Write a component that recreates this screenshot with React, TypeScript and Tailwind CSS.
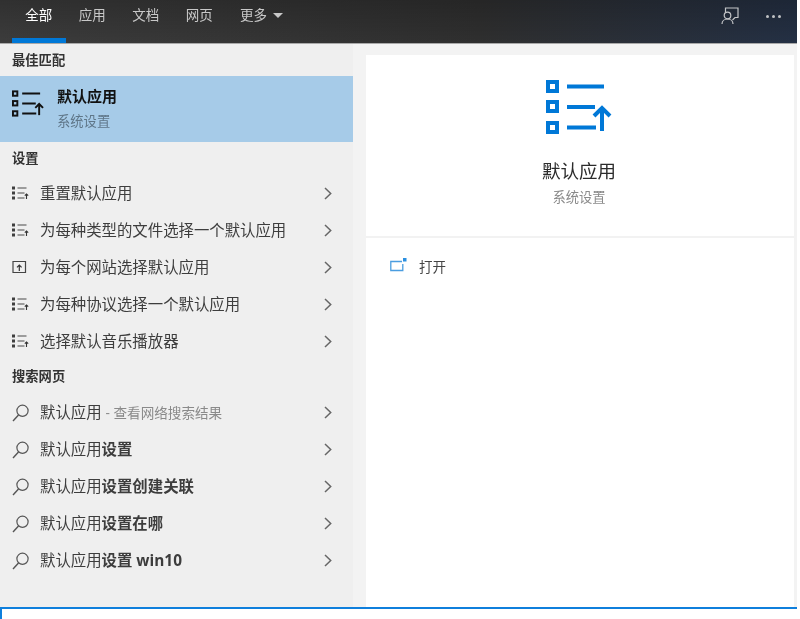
import { ReactNode } from 'react';

const tabs = ['全部', '应用', '文档', '网页'];

function ListUpIcon({ className, color }: { className: string; color: string }) {
  return (
    <svg viewBox="0 0 66 54" fill="none" className={className}>
      <g stroke={color} strokeWidth="4">
        <rect x="2" y="2" width="9" height="9" />
        <rect x="2" y="22" width="9" height="9" />
        <rect x="2" y="43" width="9" height="9" />
        <path d="M21 6.5h37M21 27h28M21 47.500h29" />
        <path d="M56 51V28" />
        <path d="M48 36l8-8 8 8" />
      </g>
    </svg>
  );
}

function SmallListIcon() {
  return (
    <svg viewBox="0 0 17 15" fill="none" className="w-[17px] h-[15px] shrink-0">
      <g fill="#3f3f3f">
        <rect x="0" y="0.500" width="3" height="3" />
        <rect x="0" y="5.500" width="3" height="3" />
        <rect x="0" y="10.500" width="3" height="3" />
      </g>
      <path d="M5.500 2h9M5.500 7h7M5.500 12h7" stroke="#4a4a4a" strokeWidth="1.100" />
      <path d="M14.500 13V8M12.800 9.700l1.700-1.700 1.700 1.700" stroke="#333" strokeWidth="1.100" />
    </svg>
  );
}

function WebIcon() {
  return (
    <svg viewBox="0 0 17 15" fill="none" className="w-[17px] h-[15px] shrink-0">
      <path d="M1 1.500h12.500v11H1z" stroke="#444" strokeWidth="1.200" />
      <path d="M7.300 11V5M5 7.300l2.300-2.300 2.300 2.300" stroke="#333" strokeWidth="1.200" />
    </svg>
  );
}

function SearchIcon() {
  return (
    <svg viewBox="0 0 17 18" fill="none" className="w-[17px] h-[18px] shrink-0">
      <circle cx="10.500" cy="6.800" r="5.600" stroke="#555" strokeWidth="1.200" />
      <path d="M6.500 11L1 17" stroke="#555" strokeWidth="1.400" />
    </svg>
  );
}

function Chevron() {
  return (
    <svg viewBox="0 0 8 13" fill="none" className="w-2 h-[13px] shrink-0">
      <path d="M1 1l5.700 5.500L1 12" stroke="#666" strokeWidth="1.500" />
    </svg>
  );
}

function FeedbackIcon() {
  return (
    <svg viewBox="0 0 18 18" fill="none" className="w-[18px] h-[18px]">
      <g stroke="#c4c6c8" strokeWidth="1.200">
        <path d="M4.500 5V1h12.500v9.500h-3l-2.500 2.500" />
        <circle cx="6.500" cy="8.500" r="3.300" />
        <path d="M1 17c0-3 2.500-5 5.500-5s5.500 2 5.500 5" />
      </g>
    </svg>
  );
}

function OpenIcon() {
  return (
    <svg viewBox="0 0 17 14" fill="none" className="w-[17px] h-[14px] shrink-0 mb-[4px]">
      <path d="M12 3.500H0.800v9h12V6" stroke="#4a9de0" strokeWidth="1.300" />
      <rect x="13" y="0" width="3.500" height="3.500" fill="#2a8fe0" />
    </svg>
  );
}

function Row({ icon, children }: { icon: ReactNode; children: ReactNode }) {
  return (
    <div className="h-[37px] flex items-center pl-3 pr-[21px]">
      <div className="w-7 shrink-0 flex items-center">{icon}</div>
      <div className="flex-1 text-[15.400px] leading-5 text-[#3d3d3d] whitespace-nowrap">{children}</div>
      <Chevron />
    </div>
  );
}

function SectionTitle({ children, h }: { children: ReactNode; h: string }) {
  return (
    <div className={`${h} flex items-center pl-3 text-[13.300px] font-bold text-[#333]`}>{children}</div>
  );
}

const settings = [
  { label: '重置默认应用', icon: <SmallListIcon /> },
  { label: '为每种类型的文件选择一个默认应用', icon: <SmallListIcon /> },
  { label: '为每个网站选择默认应用', icon: <WebIcon /> },
  { label: '为每种协议选择一个默认应用', icon: <SmallListIcon /> },
  { label: '选择默认音乐播放器', icon: <SmallListIcon /> },
];

const searches = ['设置', '设置创建关联', '设置在哪', '设置 win10'];

export default function App() {
  return (
    <div className="w-[800px] h-[619px] bg-white overflow-hidden blur-[0.5px] font-['Open_Sans','Noto_Sans_CJK_SC',sans-serif]">
      <div className="h-[44px] flex justify-between border-b border-[#a9a9a9] w-[797px] bg-[linear-gradient(to_bottom,rgba(0,0,0,0.2),rgba(0,0,0,0)),linear-gradient(to_right,#3c3c3c,#2f2f2f_60%,#243044)]">
        <div className="flex h-full pl-3">
          {tabs.map((t, i) => (
            <div
              key={t}
              className={`w-[53.500px] flex justify-center pt-[5px] text-[13.500px] leading-5 border-b-[5px] ${
                i === 0 ? 'border-b-[#0078d7] text-white' : 'border-transparent text-[#c8c8c8]'
              }`}
            >
              {t}
            </div>
          ))}
          <div className="flex items-center self-start h-[30px] pl-[14px] gap-[6px] text-[13.500px] leading-5 text-[#c8c8c8]">
            更多
            <div className="w-0 h-0 border-x-[5px] border-x-transparent border-t-[5px] border-t-[#c8c8c8]" />
          </div>
        </div>
        <div className="flex items-center self-start gap-[27px] pr-[16px] pt-[7px]">
          <FeedbackIcon />
          <div className="flex gap-[3px]">
            <div className="w-[3px] h-[3px] rounded-full bg-[#c0c2c4]" />
            <div className="w-[3px] h-[3px] rounded-full bg-[#c0c2c4]" />
            <div className="w-[3px] h-[3px] rounded-full bg-[#c0c2c4]" />
          </div>
        </div>
      </div>

      <div className="w-[797px] h-[563px] flex">
        <div className="w-[353px] bg-[#efefef] pt-[1px]">
          <SectionTitle h="h-[31px]">最佳匹配</SectionTitle>
          <div className="h-[66px] bg-[#a6cbe8] flex items-center pl-3">
            <ListUpIcon className="w-[32px] h-[27px] mr-[13px] mb-[12px]" color="#111" />
            <div className="pt-[1px]">
              <div className="text-[15px] leading-[22px] font-bold text-[#111]">默认应用</div>
              <div className="text-[13.300px] leading-[28px] text-[#5f7688]">系统设置</div>
            </div>
          </div>
          <SectionTitle h="h-[33px]">设置</SectionTitle>
          {settings.map((s) => (
            <Row key={s.label} icon={s.icon}>
              {s.label}
            </Row>
          ))}
          <SectionTitle h="h-[34px]">搜索网页</SectionTitle>
          <Row icon={<SearchIcon />}>
            默认应用 <span className="text-[13.600px] text-[#8a8a8a]">- 查看网络搜索结果</span>
          </Row>
          {searches.map((s) => (
            <Row key={s} icon={<SearchIcon />}>
              默认应用<span className="font-bold">{s}</span>
            </Row>
          ))}
        </div>

        <div className="flex-1 bg-[#f3f3f3] pt-[11px] pl-[13px] pr-[3px]">
          <div className="h-full bg-white">
            <div className="h-[183px] border-b-2 border-[#f2f2f2] flex flex-col items-center pt-[25px] pr-[2px]">
              <ListUpIcon className="w-[66px] h-[54px]" color="#0078d7" />
              <div className="mt-[23px] text-[18.500px] leading-7 text-[#2b2b2b]">默认应用</div>
              <div className="mt-[2px] text-[13.300px] leading-5 text-[#8a8a8a]">系统设置</div>
            </div>
            <div className="flex items-center pl-[24px] pt-[19px] gap-[12px] text-[13.500px] leading-5 text-[#444]">
              <OpenIcon />
              打开
            </div>
          </div>
        </div>
      </div>

      <div className="w-[797px] h-[12px] border-t-2 border-l-2 border-[#0f7fdc] bg-white" />
    </div>
  );
}
